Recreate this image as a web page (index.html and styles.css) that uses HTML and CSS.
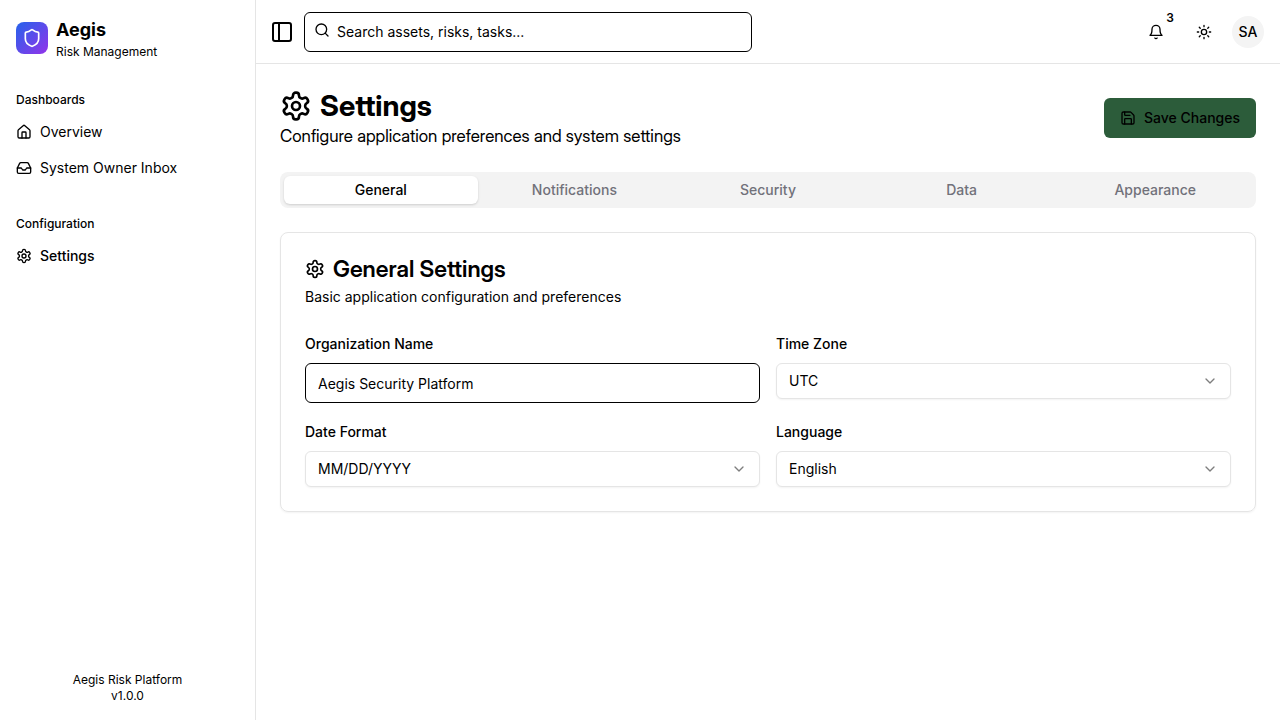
FILE: index.html
```html
<!DOCTYPE html>
<html lang="en">
<head>
<meta charset="utf-8">
<meta name="viewport" content="width=device-width, initial-scale=1">
<title>Aegis – Settings</title>
<link rel="stylesheet" href="styles.css">
</head>
<body>
<svg class="sprite" aria-hidden="true">
  <symbol id="gear" viewBox="0 0 24 24"><path d="M12.220 2h-.44a2 2 0 0 0-2 2v.18a2 2 0 0 1-1 1.730l-.43.25a2 2 0 0 1-2 0l-.15-.08a2 2 0 0 0-2.730.73l-.22.38a2 2 0 0 0 .73 2.730l.15.1a2 2 0 0 1 1 1.720v.51a2 2 0 0 1-1 1.740l-.15.09a2 2 0 0 0-.73 2.730l.22.38a2 2 0 0 0 2.730.73l.15-.08a2 2 0 0 1 2 0l.43.25a2 2 0 0 1 1 1.730V20a2 2 0 0 0 2 2h.44a2 2 0 0 0 2-2v-.18a2 2 0 0 1 1-1.730l.43-.25a2 2 0 0 1 2 0l.15.08a2 2 0 0 0 2.730-.73l.22-.39a2 2 0 0 0-.73-2.730l-.15-.08a2 2 0 0 1-1-1.740v-.5a2 2 0 0 1 1-1.740l.15-.09a2 2 0 0 0 .73-2.730l-.22-.38a2 2 0 0 0-2.730-.73l-.15.08a2 2 0 0 1-2 0l-.43-.25a2 2 0 0 1-1-1.730V4a2 2 0 0 0-2-2z"/><circle cx="12" cy="12" r="3"/></symbol>
  <symbol id="chevron" viewBox="0 0 24 24"><path d="m6 9 6 6 6-6"/></symbol>
</svg>
<div class="app">
  <aside class="sidebar">
    <div class="brand">
      <span class="brand-logo"><svg class="icon icon-md" viewBox="0 0 24 24"><path d="M20 13c0 5-3.500 7.500-7.660 8.950a1 1 0 0 1-.67-.01C7.500 20.500 4 18 4 13V6a1 1 0 0 1 1-1c2 0 4.500-1.200 6.240-2.720a1.170 1.170 0 0 1 1.520 0C14.510 3.810 17 5 19 5a1 1 0 0 1 1 1z"/></svg></span>
      <div>
        <div class="brand-name">Aegis</div>
        <div class="brand-tag">Risk Management</div>
      </div>
    </div>
    <nav class="nav">
      <section>
        <h2 class="nav-label">Dashboards</h2>
        <ul class="nav-list">
          <li><a class="nav-link" href="#overview"><svg class="icon" viewBox="0 0 24 24"><path d="M15 21v-8a1 1 0 0 0-1-1h-4a1 1 0 0 0-1 1v8"/><path d="M3 10a2 2 0 0 1 .709-1.528l7-5.999a2 2 0 0 1 2.582 0l7 5.999A2 2 0 0 1 21 10v9a2 2 0 0 1-2 2H5a2 2 0 0 1-2-2z"/></svg>Overview</a></li>
          <li><a class="nav-link" href="#inbox"><svg class="icon" viewBox="0 0 24 24"><path d="M22 12h-6l-2 3h-4l-2-3H2"/><path d="M5.450 5.110 2 12v6a2 2 0 0 0 2 2h16a2 2 0 0 0 2-2v-6l-3.450-6.890A2 2 0 0 0 16.760 4H7.240a2 2 0 0 0-1.790 1.110z"/></svg>System Owner Inbox</a></li>
        </ul>
      </section>
      <section>
        <h2 class="nav-label">Configuration</h2>
        <ul class="nav-list">
          <li><a class="nav-link nav-link-active" href="#settings" aria-current="page"><svg class="icon"><use href="#gear"/></svg>Settings</a></li>
        </ul>
      </section>
    </nav>
    <footer class="sidebar-footer">
      <div>Aegis Risk Platform</div>
      <div>v1.0.0</div>
    </footer>
  </aside>
  <div class="page">
    <header class="topbar">
      <button class="toggle" type="button" aria-label="Toggle sidebar"><svg class="icon icon-lg" viewBox="0 0 24 24"><rect x="3" y="3" width="18" height="18" rx="2"/><path d="M9 3v18"/></svg></button>
      <div class="search">
        <svg class="icon search-icon" viewBox="0 0 24 24"><circle cx="11" cy="11" r="8"/><path d="m21 21-4.300-4.300"/></svg>
        <input class="input search-input" type="search" aria-label="Search" placeholder="Search assets, risks, tasks...">
      </div>
      <div class="actions">
        <button class="icon-button" type="button" aria-label="Notifications"><svg class="icon" viewBox="0 0 24 24"><path d="M6 8a6 6 0 0 1 12 0c0 7 3 9 3 9H3s3-2 3-9"/><path d="M10.300 21a1.940 1.940 0 0 0 3.400 0"/></svg><span class="badge">3</span></button>
        <button class="icon-button" type="button" aria-label="Toggle theme"><svg class="icon" viewBox="0 0 24 24"><circle cx="12" cy="12" r="4"/><path d="M12 2v2M12 20v2M4.930 4.930l1.410 1.410M17.660 17.660l1.410 1.410M2 12h2M20 12h2M6.340 17.660l-1.410 1.410M19.070 4.930l-1.410 1.410"/></svg></button>
        <button class="avatar" type="button">SA</button>
      </div>
    </header>
    <main class="content">
      <div class="heading">
        <div>
          <h1 class="title"><svg class="icon icon-xl"><use href="#gear"/></svg>Settings</h1>
          <p class="subtitle">Configure application preferences and system settings</p>
        </div>
        <button class="save" type="button"><svg class="icon" viewBox="0 0 24 24"><path d="M15.200 3a2 2 0 0 1 1.400.6l3.800 3.800a2 2 0 0 1 .6 1.400V19a2 2 0 0 1-2 2H5a2 2 0 0 1-2-2V5a2 2 0 0 1 2-2z"/><path d="M17 21v-7a1 1 0 0 0-1-1H8a1 1 0 0 0-1 1v7"/><path d="M7 3v4a1 1 0 0 0 1 1h7"/></svg>Save Changes</button>
      </div>
      <div class="tabs" role="tablist">
        <button class="tab tab-active" type="button" role="tab" aria-selected="true">General</button>
        <button class="tab" type="button" role="tab" aria-selected="false">Notifications</button>
        <button class="tab" type="button" role="tab" aria-selected="false">Security</button>
        <button class="tab" type="button" role="tab" aria-selected="false">Data</button>
        <button class="tab" type="button" role="tab" aria-selected="false">Appearance</button>
      </div>
      <section class="card">
        <div class="card-header">
          <h2 class="card-title"><svg class="icon icon-md"><use href="#gear"/></svg>General Settings</h2>
          <p class="card-text">Basic application configuration and preferences</p>
        </div>
        <form class="fields">
          <div class="field">
            <label for="org">Organization Name</label>
            <input class="input" id="org" type="text" value="Aegis Security Platform">
          </div>
          <div class="field">
            <label for="zone">Time Zone</label>
            <div class="select-wrap"><select class="select" id="zone"><option>UTC</option></select><svg class="icon chevron"><use href="#chevron"/></svg></div>
          </div>
          <div class="field">
            <label for="date">Date Format</label>
            <div class="select-wrap"><select class="select" id="date"><option>MM/DD/YYYY</option></select><svg class="icon chevron"><use href="#chevron"/></svg></div>
          </div>
          <div class="field">
            <label for="lang">Language</label>
            <div class="select-wrap"><select class="select" id="lang"><option>English</option></select><svg class="icon chevron"><use href="#chevron"/></svg></div>
          </div>
        </form>
      </section>
    </main>
  </div>
</div>
</body>
</html>
```

FILE: styles.css
```css
* { box-sizing: border-box; }

body {
  margin: 0;
  background: #fff;
  color: #000;
  font-family: Inter, "Liberation Sans", sans-serif;
  font-size: 14px;
  line-height: 20px;
}

h1, h2, p, ul { margin: 0; padding: 0; }
ul { list-style: none; }

button, input, select { font: inherit; color: inherit; margin: 0; }

button {
  border: 0;
  padding: 0;
  background: none;
  cursor: pointer;
}

.sprite { position: absolute; width: 0; height: 0; }

.icon {
  flex: none;
  width: 16px;
  height: 16px;
  fill: none;
  stroke: currentColor;
  stroke-width: 2;
  stroke-linecap: round;
  stroke-linejoin: round;
}
.icon-md { width: 20px; height: 20px; }
.icon-lg { width: 24px; height: 24px; }
.icon-xl { width: 32px; height: 32px; }

.app { display: flex; min-height: 100vh; }

/* Sidebar */
.sidebar {
  display: flex;
  flex: none;
  flex-direction: column;
  width: 256px;
  border-right: 1px solid #e5e5e5;
}

.brand {
  display: flex;
  align-items: center;
  gap: 8px;
  padding: 16px;
}
.brand-logo {
  display: grid;
  place-items: center;
  width: 32px;
  height: 32px;
  border-radius: 8px;
  background: linear-gradient(to bottom right, #2563eb, #9333ea);
  color: #fff;
}
.brand-name { font-size: 18px; font-weight: 700; line-height: 28px; }
.brand-tag { font-size: 12px; line-height: 16px; }

.nav {
  display: flex;
  flex: 1;
  flex-direction: column;
  gap: 24px;
  padding: 8px;
}
.nav-label {
  padding: 0 8px;
  font-size: 12px;
  font-weight: 500;
  line-height: 32px;
}
.nav-list { display: grid; gap: 4px; }
.nav-link {
  display: flex;
  align-items: center;
  gap: 8px;
  padding: 6px 8px;
  color: inherit;
  text-decoration: none;
}
.nav-link-active { font-weight: 500; }

.sidebar-footer {
  padding: 16px;
  font-size: 12px;
  line-height: 16px;
  text-align: center;
}

/* Top bar */
.page { flex: 1; min-width: 0; }

.topbar {
  display: flex;
  align-items: center;
  gap: 8px;
  height: 64px;
  padding: 0 16px 0 12px;
  border-bottom: 1px solid #e5e5e5;
}
.toggle {
  display: grid;
  place-items: center;
  width: 28px;
  height: 28px;
}

.input {
  width: 100%;
  height: 40px;
  padding: 0 12px;
  border: 1px solid #000;
  border-radius: 6px;
  background: #fff;
  outline: 0;
}
.input::placeholder { color: #000; opacity: 1; }

.search { position: relative; flex: 1; max-width: 448px; }
.search-input { padding-left: 32px; appearance: none; }
.search-icon { position: absolute; top: 10px; left: 10px; }

.actions {
  display: flex;
  align-items: center;
  gap: 8px;
  margin-left: auto;
}
.icon-button {
  position: relative;
  display: grid;
  place-items: center;
  width: 40px;
  height: 40px;
}
.badge {
  position: absolute;
  top: -4px;
  right: -4px;
  width: 20px;
  font-size: 12px;
  font-weight: 600;
  line-height: 20px;
  text-align: center;
}
.avatar {
  width: 32px;
  height: 32px;
  border-radius: 50%;
  background: #f4f4f4;
  font-weight: 500;
}

/* Content */
.content { display: grid; gap: 24px; padding: 24px; }

.heading {
  display: flex;
  align-items: center;
  justify-content: space-between;
  gap: 16px;
}
.title, .subtitle, .card-title {
  font-family: "Inter Display", Inter, "Liberation Sans", sans-serif;
}
.title {
  display: flex;
  align-items: center;
  gap: 8px;
  font-size: 29px;
  font-weight: 700;
  line-height: 36px;
}
.subtitle { font-size: 17px; line-height: 24px; }

.save {
  display: flex;
  align-items: center;
  gap: 8px;
  height: 40px;
  padding: 0 16px;
  border-radius: 6px;
  background: #2c5c3a;
  font-weight: 500;
}

.tabs {
  display: grid;
  grid-template-columns: repeat(5, 1fr);
  padding: 4px;
  border-radius: 8px;
  background: #f3f3f3;
}
.tab {
  padding: 4px 12px;
  border-radius: 6px;
  color: #71717a;
  font-weight: 500;
}
.tab-active {
  background: #fff;
  color: #000;
  box-shadow: 0 1px 3px rgba(0, 0, 0, 0.1), 0 1px 2px rgba(0, 0, 0, 0.06);
}

.card {
  display: grid;
  gap: 24px;
  padding: 24px;
  border: 1px solid #e5e5e5;
  border-radius: 8px;
  box-shadow: 0 1px 2px rgba(0, 0, 0, 0.05);
}
.card-header { display: grid; gap: 6px; }
.card-title {
  display: flex;
  align-items: center;
  gap: 8px;
  font-size: 23px;
  font-weight: 600;
  line-height: 24px;
}

.fields {
  display: grid;
  grid-template-columns: 1fr 1fr;
  gap: 16px;
}
.field { display: grid; align-content: start; gap: 6px; }
.field label { font-weight: 500; line-height: 26px; }

.select-wrap { position: relative; }
.select {
  display: block;
  width: 100%;
  height: 36px;
  padding: 0 36px 0 12px;
  border: 1px solid #e5e5e5;
  border-radius: 6px;
  background: #fff;
  box-shadow: 0 1px 2px rgba(0, 0, 0, 0.05);
  appearance: none;
}
.chevron {
  position: absolute;
  top: 10px;
  right: 13px;
  opacity: 0.5;
  pointer-events: none;
}
```
